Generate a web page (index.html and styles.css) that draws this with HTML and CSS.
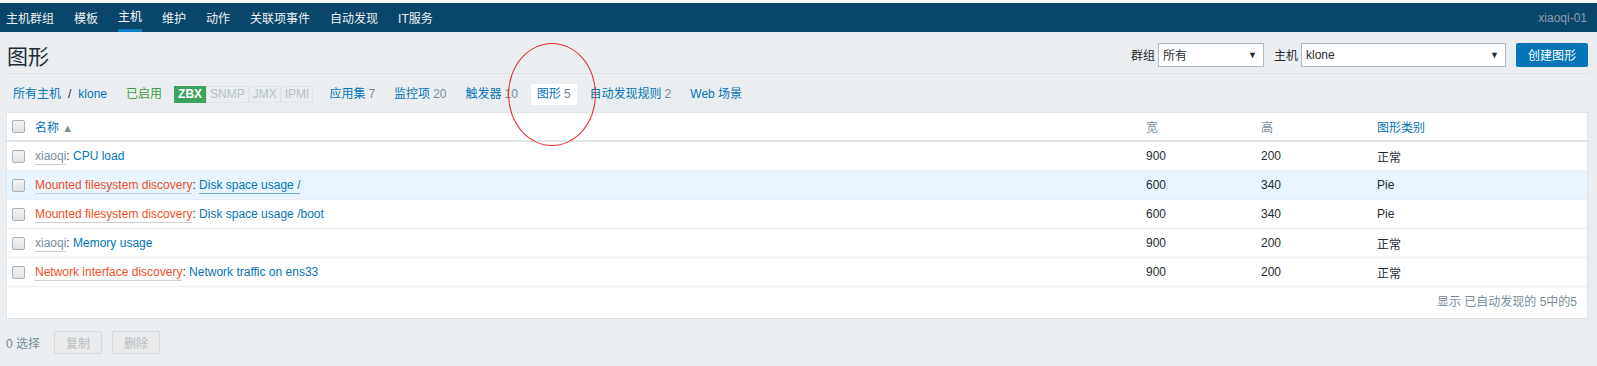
FILE: index.html
```html
<!DOCTYPE html>
<html lang="zh-CN">
<head>
  <meta charset="UTF-8" />
  <title>图形</title>
  <link rel="stylesheet" href="styles.css">
</head>
<body>
  <div class="top-strip"></div>
  <div class="top-nav">
    <ul class="menu">
      <li>主机群组</li>
      <li>模板</li>
      <li class="selected"><span>主机</span></li>
      <li>维护</li>
      <li>动作</li>
      <li>关联项事件</li>
      <li>自动发现</li>
      <li>IT服务</li>
    </ul>
    <div class="user">xiaoqi-01</div>
  </div>

  <div class="page">
    <div class="header">
      <h1>图形</h1>
      <div class="filter">
        <label>群组</label>
        <div class="select small"><span>所有</span><i>▼</i></div>
        <label>主机</label>
        <div class="select large"><span>klone</span><i>▼</i></div>
        <button class="btn-primary">创建图形</button>
      </div>
    </div>

    <ul class="object-nav">
      <li><a>所有主机</a><span class="sep">/</span><a>klone</a></li>
      <li class="status-item">
        <span class="green">已启用</span>
        <span class="status">
          <span class="on">ZBX</span><span>SNMP</span><span>JMX</span><span>IPMI</span>
        </span>
      </li>
      <li><a>应用集</a><span class="count">7</span></li>
      <li><a>监控项</a><span class="count">20</span></li>
      <li><a>触发器</a><span class="count">10</span></li>
      <li class="current"><a>图形</a><span class="count">5</span></li>
      <li><a>自动发现规则</a><span class="count">2</span></li>
      <li><a>Web 场景</a></li>
    </ul>

    <div class="table-box">
      <table class="list">
        <colgroup>
          <col style="width: 22px">
          <col>
          <col style="width: 115px">
          <col style="width: 116px">
          <col style="width: 216px">
        </colgroup>
        <thead>
          <tr>
            <th><span class="cb"></span></th>
            <th><a>名称</a> <span class="arrow">▲</span></th>
            <th class="muted">宽</th>
            <th class="muted">高</th>
            <th><a>图形类别</a></th>
          </tr>
        </thead>
        <tbody>
          <tr>
            <td><span class="cb"></span></td>
            <td><span class="parent gray">xiaoqi</span>: <a>CPU load</a></td>
            <td>900</td><td>200</td><td>正常</td>
          </tr>
          <tr class="hover">
            <td><span class="cb"></span></td>
            <td><span class="parent orange">Mounted filesystem discovery</span>: <a class="under">Disk space usage /</a></td>
            <td>600</td><td>340</td><td>Pie</td>
          </tr>
          <tr>
            <td><span class="cb"></span></td>
            <td><span class="parent orange">Mounted filesystem discovery</span>: <a>Disk space usage /boot</a></td>
            <td>600</td><td>340</td><td>Pie</td>
          </tr>
          <tr>
            <td><span class="cb"></span></td>
            <td><span class="parent gray">xiaoqi</span>: <a>Memory usage</a></td>
            <td>900</td><td>200</td><td>正常</td>
          </tr>
          <tr>
            <td><span class="cb"></span></td>
            <td><span class="parent orange">Network interface discovery</span>: <a>Network traffic on ens33</a></td>
            <td>900</td><td>200</td><td>正常</td>
          </tr>
        </tbody>
      </table>
      <div class="table-stats">显示 已自动发现的 5中的5</div>
    </div>

    <div class="actions">
      <span class="selected-count">0 选择</span>
      <button class="btn-disabled">复制</button>
      <button class="btn-disabled">删除</button>
    </div>
  </div>

  <div class="mark"></div>
</body>
</html>
```

FILE: styles.css
```css
body {
  margin: 0;
  background: #ebeef0;
  font-family: "Liberation Sans", Arial, "Noto Sans CJK SC", sans-serif;
  font-size: 12px;
  color: #1f2c33;
  position: relative;
}
ul {
  list-style: none;
  margin: 0;
  padding: 0;
}
a {
  color: #0275b8;
}
.top-strip {
  height: 3px;
  background: #fff;
}
.top-nav {
  height: 29px;
  background: #0a466a;
  display: flex;
  justify-content: space-between;
  align-items: stretch;
  padding: 0 10px 0 6px;
}
.menu {
  display: flex;
  gap: 20px;
}
.menu li {
  display: flex;
  align-items: center;
  color: #eef2f4;
}
.menu li.selected span {
  height: 29px;
  line-height: 29px;
  box-sizing: border-box;
  border-bottom: 3px solid #0e7ac0;
  color: #fff;
}
.user {
  display: flex;
  align-items: center;
  color: #8a9eab;
}
.page {
  padding: 0 9px 0 6px;
}
.header {
  height: 37px;
  padding-top: 4px;
  display: flex;
  align-items: center;
  justify-content: space-between;
  border-bottom: 1px solid #dde3e6;
}
.header h1 {
  margin: 0 0 0 1px;
  font-size: 21px;
  font-weight: normal;
  color: #1f2c33;
}
.filter {
  display: flex;
  align-items: center;
}
.filter label {
  margin-right: 3px;
}
.select {
  height: 24px;
  box-sizing: border-box;
  border: 1px solid #acbbc2;
  background: #fff;
  display: flex;
  align-items: center;
  justify-content: space-between;
  padding: 0 6px 0 4px;
  margin-right: 10px;
}
.select i {
  font-style: normal;
  font-size: 9px;
  color: #1f2c33;
}
.select.small {
  width: 106px;
}
.select.large {
  width: 205px;
}
.btn-primary {
  height: 24px;
  width: 72px;
  border: 0;
  border-radius: 2px;
  background: #0275b8;
  color: #fff;
  font: inherit;
  padding: 0;
}
.object-nav {
  height: 30px;
  padding: 5px 0 0 1px;
  display: flex;
  align-items: center;
  gap: 7px;
}
.object-nav li {
  padding: 3px 6px;
  line-height: 15px;
  display: flex;
  align-items: center;
}
.object-nav .sep {
  color: #1f2c33;
  margin: 0 7px;
}
.object-nav .count {
  color: #768d99;
  margin-left: 3px;
}
.object-nav li.current {
  background: #fff;
}
.green {
  color: #429e47;
}
.object-nav li.status-item {
  padding-right: 3px;
}
.status {
  display: flex;
  margin-left: 12px;
}
.status span {
  border: 1px solid #dfe4e7;
  color: #b4c2c8;
  padding: 0 3px;
  line-height: 15px;
  font-size: 12px;
}
.status span.on {
  background: #3ca35c;
  border-color: #3ca35c;
  color: #fff;
  font-weight: bold;
  padding: 0 3px;
}
.table-box {
  margin-top: 3px;
  background: #fff;
  border: 1px solid #dfe4e7;
}
.list {
  width: 100%;
  border-collapse: collapse;
  table-layout: fixed;
}
.list th {
  height: 27px;
  text-align: left;
  font-weight: normal;
  border-bottom: 2px solid #dfe4e7;
  padding: 0 6px;
}
.list td {
  height: 28px;
  padding: 0 6px;
  border-bottom: 1px solid #ebeef0;
}
.list th:first-child,
.list td:first-child {
  padding: 0 0 0 5px;
}
.list th.muted {
  color: #768d99;
}
.arrow {
  color: #768d99;
  font-size: 11px;
}
.list tr.hover td {
  background: #e8f5ff;
}
.cb {
  display: block;
  width: 11px;
  height: 11px;
  border: 1px solid #a7b1b7;
  border-radius: 2px;
  background: linear-gradient(#f4f4f4, #e2e2e2);
}
.parent {
  border-bottom: 1px solid #c9d1d6;
  padding-bottom: 1px;
}
.gray {
  color: #768d99;
}
.orange {
  color: #f24f1d;
}
a.under {
  border-bottom: 1px solid #6aaee0;
  padding-bottom: 1px;
}
.table-stats {
  height: 31px;
  line-height: 31px;
  text-align: right;
  padding-right: 10px;
  color: #768d99;
}
.actions {
  display: flex;
  align-items: center;
  gap: 10px;
  padding-top: 12px;
}
.selected-count {
  color: #768d99;
  margin-right: 4px;
}
.btn-disabled {
  width: 48px;
  height: 23px;
  padding: 0;
  border: 1px solid #d3d9dc;
  border-radius: 2px;
  background: #ebebeb;
  color: #b3bec4;
  font: inherit;
}
.mark {
  position: absolute;
  left: 508px;
  top: 43px;
  width: 86px;
  height: 101px;
  border: 1px solid #e8262b;
  border-radius: 50%;
}
```
